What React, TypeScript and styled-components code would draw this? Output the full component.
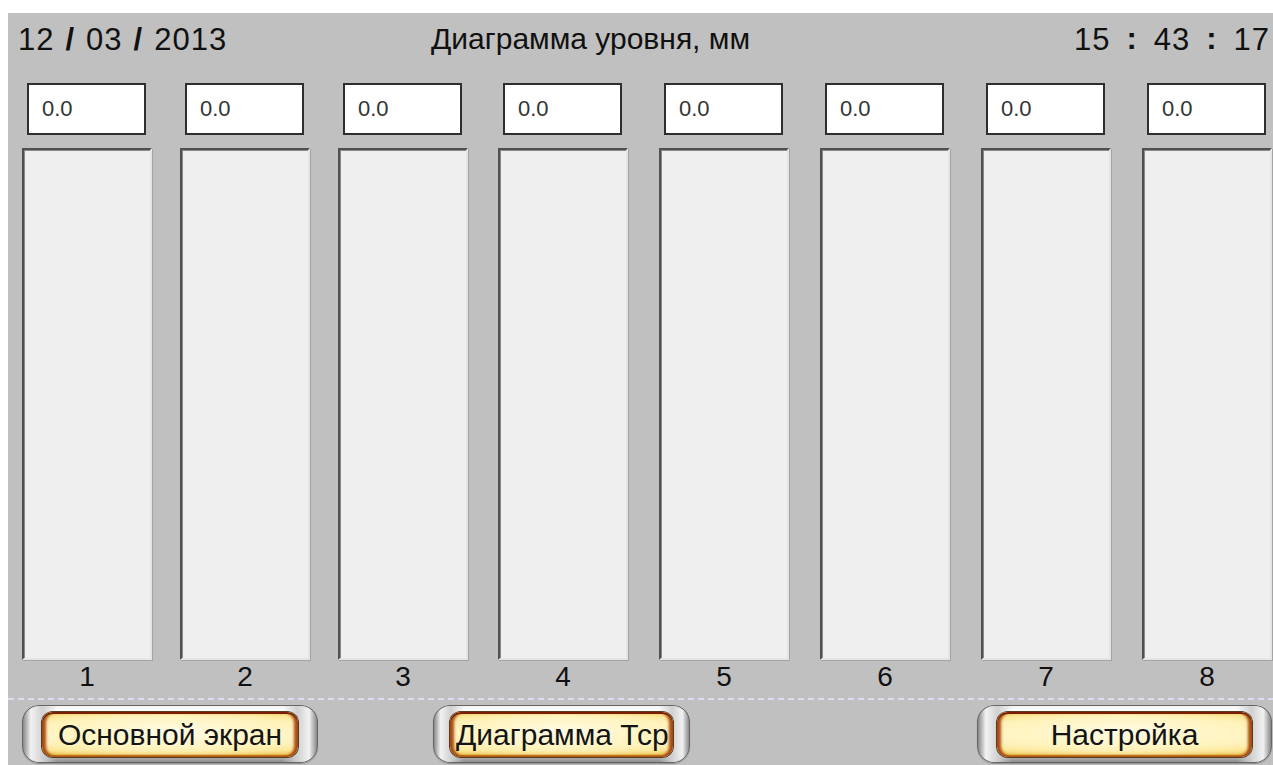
import styled, { createGlobalStyle } from "styled-components";

const GlobalStyle = createGlobalStyle`
  html, body {
    margin: 0;
    padding: 0;
    background: #ffffff;
    overflow: hidden;
  }
  body {
    padding: 13px 0 0 8px;
    font-family: "Liberation Sans", Arial, sans-serif;
  }
`;

const Screen = styled.div`
  width: 1265px;
  height: 752px;
  background: #c0c0c0;
  display: flex;
  flex-direction: column;
  color: #111;
`;

const Header = styled.div`
  height: 56px;
  display: flex;
  align-items: center;
  padding: 0 3px 4px 10px;
  box-sizing: border-box;
`;

const Stamp = styled.div`
  display: flex;
  align-items: center;
  font-size: 31px;
  letter-spacing: 1px;
  line-height: 1;
`;

const DateStamp = styled(Stamp)`
  width: 413px;
`;

const TimeStamp = styled(Stamp)`
  margin-left: auto;
`;

const Sep = styled.span<{ $gap: number }>`
  font-weight: bold;
  margin: 0 ${(p) => p.$gap}px;
`;

const Colon = styled.span`
  font-weight: bold;
  margin: 0 16px;
  position: relative;
  top: -1px;
`;

const Title = styled.div`
  font-size: 30px;
  line-height: 1;
`;

const Columns = styled.div`
  display: flex;
  padding: 14px 0 0 14px;
`;

const Column = styled.div<{ $gap: number }>`
  width: 130px;
  margin-left: ${(p) => p.$gap}px;
  display: flex;
  flex-direction: column;
`;

const ValueBox = styled.div`
  width: 119px;
  height: 52px;
  margin-left: 5px;
  box-sizing: border-box;
  background: #ffffff;
  border: 2px solid #2e2e2e;
  display: flex;
  align-items: center;
  padding-left: 13px;
  font-size: 22px;
  color: #333;
`;

const Bar = styled.div`
  margin-top: 13px;
  height: 512px;
  box-sizing: border-box;
  background: #efefef;
  border: 2px solid;
  border-color: #505050 #e4e4e4 #e4e4e4 #505050;
  box-shadow: 1px 1px 0 #a4a4a4, inset 1px 1px 0 #8a8a8a;
`;

const Label = styled.div`
  height: 38px;
  display: flex;
  align-items: center;
  justify-content: center;
  font-size: 28px;
  padding-bottom: 4px;
  box-sizing: border-box;
`;

const Divider = styled.div`
  height: 2px;
  background: repeating-linear-gradient(
    90deg,
    #dddcf0 0 6px,
    transparent 6px 10px
  );
`;

const Footer = styled.div`
  display: flex;
  padding: 5px 0 0 14px;
`;

const ButtonFrame = styled.div<{ $width: number; $offset: number; $inset: number }>`
  width: ${(p) => p.$width}px;
  height: 58px;
  margin-left: ${(p) => p.$offset}px;
  box-sizing: border-box;
  padding: 7px ${(p) => p.$inset}px 6px;
  border-radius: 17px;
  background:
    linear-gradient(90deg, #7a7a7a 0%, #f2f2f2 3%, #d0d0d0 7%, transparent 12%, transparent 88%, #d0d0d0 93%, #f2f2f2 97%, #7a7a7a 100%),
    linear-gradient(180deg, #f0f0f0 0%, #ffffff 10%, #dcdcdc 55%, #b0b0b0 90%, #888888 100%);
  box-shadow: inset 0 0 0 1px #666666, 0 1px 1px rgba(0, 0, 0, 0.25);
`;

const ButtonFace = styled.div<{ $shift?: number }>`
  height: 100%;
  border-radius: 11px;
  display: flex;
  align-items: center;
  justify-content: ${(p) => (p.$shift ? "flex-start" : "center")};
  padding-left: ${(p) => p.$shift || 0}px;
  overflow: hidden;
  white-space: nowrap;
  font-size: 30px;
  color: #141414;
  background:
    radial-gradient(ellipse 70% 60% at 50% 45%, #fffbe6 0%, #fff4c2 55%, rgba(255, 240, 170, 0) 100%),
    linear-gradient(180deg, #f4d860 0%, #fff0b0 25%, #fff6d0 55%, #fbe590 85%, #e8b640 100%);
  box-shadow:
    inset 0 2px 0 #7c1e00,
    inset 4px 0 3px #a84a10,
    inset -4px 0 3px #a84a10,
    inset 0 -2px 1px #c0781a,
    0 0 0 1px #5a3a20;
`;

// gaps between the level columns
const gaps = [0, 28, 28, 30, 31, 31, 31, 31];

function App() {
  return (
    <>
      <GlobalStyle />
      <Screen>
        <Header>
          <DateStamp>
            <span>12</span>
            <Sep $gap={11}>/</Sep>
            <span>03</span>
            <Sep $gap={11}>/</Sep>
            <span>2013</span>
          </DateStamp>
          <Title>Диаграмма уровня, мм</Title>
          <TimeStamp>
            <span>15</span>
            <Colon>:</Colon>
            <span>43</span>
            <Colon>:</Colon>
            <span>17</span>
          </TimeStamp>
        </Header>

        <Columns>
          {gaps.map((g, i) => (
            <Column key={i} $gap={g}>
              <ValueBox>0.0</ValueBox>
              <Bar />
              <Label>{i + 1}</Label>
            </Column>
          ))}
        </Columns>

        <Divider />

        <Footer>
          <ButtonFrame $width={296} $offset={0} $inset={20}>
            <ButtonFace>Основной экран</ButtonFace>
          </ButtonFrame>
          <ButtonFrame $width={257} $offset={115} $inset={17}>
            <ButtonFace $shift={6}>Диаграмма Тср</ButtonFace>
          </ButtonFrame>
          <ButtonFrame $width={295} $offset={287} $inset={20}>
            <ButtonFace>Настройка</ButtonFace>
          </ButtonFrame>
        </Footer>
      </Screen>
    </>
  );
}

export default App;
